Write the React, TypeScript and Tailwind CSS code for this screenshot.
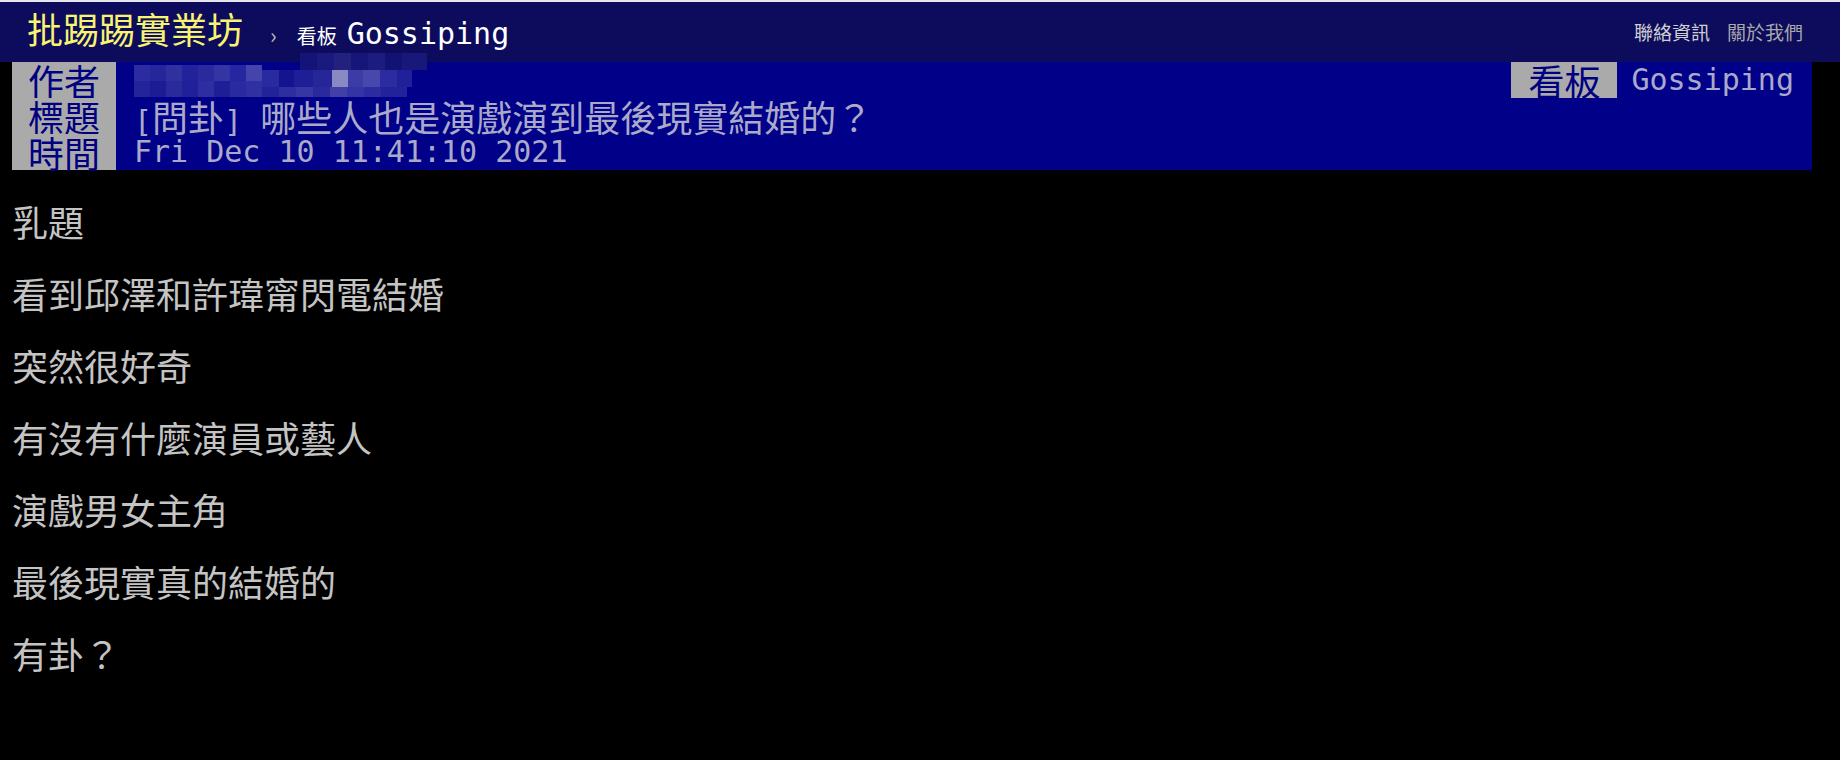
import React from 'react';

const cjk = "font-['Noto_Sans_CJK_TC',sans-serif]";
const mono = "font-['DejaVu_Sans_Mono','Noto_Sans_CJK_TC',monospace] text-[30px]";

const bodyLines = [
  '乳題',
  '看到邱澤和許瑋甯閃電結婚',
  '突然很好奇',
  '有沒有什麼演員或藝人',
  '演戲男女主角',
  '最後現實真的結婚的',
  '有卦？',
];

// mosaic blocks covering the author id: [x, y, w, h, color]
const mosaic: [number, number, number, number, string][] = [
  [134, 65, 16, 16, '#2c2ca0'], [150, 65, 16, 16, '#26269c'], [166, 65, 16, 16, '#30309f'],
  [182, 65, 16, 16, '#22229a'], [198, 65, 16, 16, '#2a2a9e'], [214, 65, 16, 16, '#3434a4'],
  [230, 65, 16, 16, '#2626a0'], [246, 65, 16, 16, '#4444aa'],
  [134, 81, 16, 16, '#24249a'], [150, 81, 16, 16, '#1c1c94'], [166, 81, 16, 16, '#2a2a9c'],
  [182, 81, 16, 16, '#20209a'], [198, 81, 16, 16, '#2e2ea0'], [214, 81, 16, 16, '#1e1e96'],
  [230, 81, 16, 16, '#2a2aa0'], [246, 81, 16, 16, '#3030a2'],
  [300, 53, 17, 17, '#141478'], [317, 53, 17, 17, '#1a1a7e'], [334, 53, 17, 17, '#22227e'],
  [351, 53, 17, 17, '#16167a'], [368, 53, 17, 17, '#1c1c80'], [385, 53, 17, 17, '#121272'],
  [402, 53, 25, 17, '#18187a'],
  [262, 70, 17, 17, '#2a2aa0'], [279, 70, 15, 17, '#141490'], [294, 70, 19, 17, '#1e1e96'],
  [313, 70, 19, 17, '#262698'], [332, 70, 16, 17, '#8a8ac2'], [348, 70, 15, 17, '#3c3ca6'],
  [363, 70, 17, 17, '#4848ac'], [380, 70, 17, 17, '#2c2ca0'], [397, 70, 15, 17, '#20209a'],
  [262, 87, 17, 10, '#22229a'], [279, 87, 17, 10, '#2e2ea0'], [296, 87, 17, 10, '#3636a4'],
  [313, 87, 17, 10, '#2a2a9e'], [330, 87, 17, 10, '#4040a8'], [347, 87, 17, 10, '#3434a4'],
  [364, 87, 17, 10, '#2c2ca0'], [381, 87, 26, 10, '#22229a'],
];

const Label: React.FC<{ text: string }> = ({ text }) => (
  <span className={`${cjk} block h-[36px] w-[104px] shrink-0 bg-[#aaaaaa] px-[16px] text-[36px] leading-[36px] text-[#000080]`}>
    {text}
  </span>
);

export default function App() {
  return (
    <div className="relative min-h-screen w-full overflow-hidden bg-black">
      <div className="h-[2px] bg-[#e6e6ee]" />

      <header className="flex h-[60px] items-center justify-between bg-[#0c0b5c] pb-[6px] pl-[27px] pr-[37px]">
        <div className="flex items-baseline">
          <span className={`${cjk} text-[36px] leading-none text-[#f8f470]`}>批踢踢實業坊</span>
          <span className={`${cjk} ml-[27px] text-[22px] leading-none text-[#bbbbbb]`}>›</span>
          <span className={`${cjk} ml-[20px] text-[20px] leading-none text-white`}>看板</span>
          <span className="ml-[10px] font-['DejaVu_Sans_Mono',monospace] text-[30px] leading-none text-white">Gossiping</span>
        </div>
        <nav className={`${cjk} mt-[4px] flex gap-[17px] text-[19px] leading-none`}>
          <span className="text-[#cfcfcf]">聯絡資訊</span>
          <span className="text-[#a8a8a8]">關於我們</span>
        </nav>
      </header>

      <div className={`${cjk} ml-[12px] mr-[28px] bg-[#000088] text-[36px] leading-[36px] text-[#aaaac8]`}>
        <div className="flex h-[36px]">
          <Label text="作者" />
          <span className={`${mono} pl-[18px]`}>&nbsp;</span>
          <div className="ml-auto flex">
            <span className={`${cjk} block h-[36px] w-[106px] bg-[#aaaaaa] px-[17px] text-[36px] leading-[36px] text-[#000080]`}>看板</span>
            <span className={`${mono} pl-[14px] pr-[18px]`}>Gossiping</span>
          </div>
        </div>
        <div className="flex h-[36px]">
          <Label text="標題" />
          <span className="whitespace-pre pl-[18px]">
            <span className={mono}>[</span>問卦<span className={mono}>] </span>哪些人也是演戲演到最後現實結婚的？
          </span>
        </div>
        <div className="flex h-[36px]">
          <Label text="時間" />
          <span className={`${mono} whitespace-pre pl-[18px]`}>Fri Dec 10 11:41:10 2021</span>
        </div>
      </div>

      <div className={`${cjk} pl-[12px] pt-[33px] text-[36px] leading-[36px] text-[#c4c4c4]`}>
        {bodyLines.map((line) => (
          <React.Fragment key={line}>
            <div className="h-[36px]">{line}</div>
            <div className="h-[36px]" />
          </React.Fragment>
        ))}
      </div>

      <svg className="absolute left-0 top-0" width="440" height="110" viewBox="0 0 440 110">
        {mosaic.map(([x, y, w, h, c], i) => (
          <rect key={i} x={x} y={y} width={w} height={h} fill={c} />
        ))}
      </svg>
    </div>
  );
}
